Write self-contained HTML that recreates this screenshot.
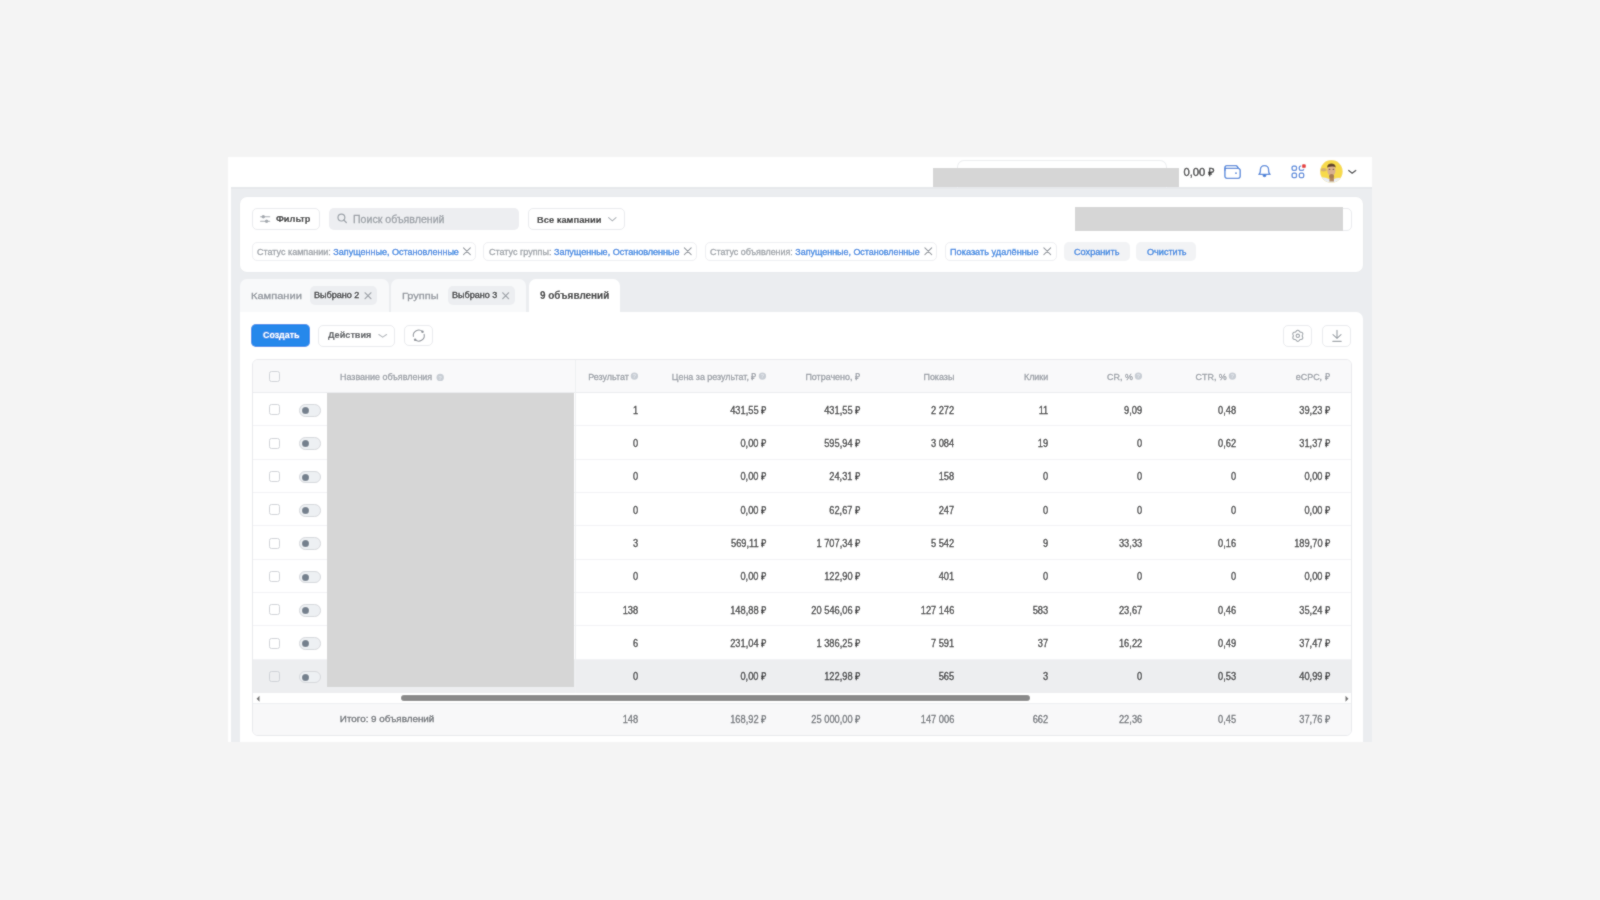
<!DOCTYPE html>
<html><head><meta charset="utf-8"><style>
*{box-sizing:border-box;margin:0;padding:0}
html,body{width:1600px;height:900px;overflow:hidden;background:#f4f4f4;font-family:"Liberation Sans",sans-serif;color:#2c2d2e}
.a{position:absolute}
.mask{position:absolute;background:#d6d6d6}
.card{position:absolute;background:#fff}
.ol{position:absolute;border:1px solid #eaebee;border-radius:5px;background:#fff}
.t{position:absolute;white-space:nowrap;line-height:1;transform-origin:0 50%;-webkit-text-stroke:0.3px currentColor}
.chip{position:absolute;top:242px;height:18.5px;border:1px solid #eeeff2;border-radius:5px;background:#fff}
.blue{color:#2d81e0;-webkit-text-stroke:0.3px #2d81e0}
.sbtn{position:absolute;top:242px;height:18.5px;border-radius:5px;background:#f2f3f5}
.tab{position:absolute;top:278.75px;height:33.5px;border-radius:7px 7px 0 0;background:#f8f9fa}
.tchip{position:absolute;top:286px;height:19px;border-radius:5px;background:#eceef1}
.ns{display:inline-block;width:3px}
.rs{display:inline-block;width:3px}
.v{position:absolute;white-space:nowrap;line-height:1;transform-origin:100% 50%;-webkit-text-stroke:0.3px currentColor}
.cb{position:absolute;width:11px;height:11px;border:1.1px solid #cfd2d7;border-radius:2.5px}
.tg{position:absolute;width:21.5px;height:12.6px;border:1.2px solid #d6d8dc;border-radius:6.3px;background:#edf0f3}
.tg:after{content:"";position:absolute;left:2px;top:2px;width:7.1px;height:7.1px;border-radius:50%;background:#75808d}
#wrap{position:absolute;left:0;top:0;width:1600px;height:900px;filter:url(#soft)}</style></head><body><svg width="0" height="0" style="position:absolute"><filter id="soft" x="0" y="0" width="100%" height="100%"><feConvolveMatrix order="3" kernelMatrix="1 2 1 2 16 2 1 2 1" edgeMode="duplicate"/></filter></svg><div id="wrap">
<div class="card" style="left:228px;top:156.5px;width:1144px;height:585.5px"></div>
<div class="a" style="left:231px;top:187.2px;width:1141px;height:554.8px;background:#ebedf0"></div>
<div class="a" style="left:231px;top:187.2px;width:1141px;height:1.4px;background:#e6e8eb"></div>
<div class="a" style="left:957px;top:160px;width:210px;height:27.5px;border:1px solid #eceef0;border-bottom:none;border-radius:7px 7px 0 0"></div>
<div class="mask" style="left:933px;top:167.5px;width:246px;height:19.7px"></div>
<div class="card" style="left:240px;top:196.8px;width:1123px;height:75.2px;border-radius:7px;box-shadow:0 0 0 0.6px #e6e8eb"></div>
<div class="ol" style="left:251.5px;top:208px;width:68px;height:22px"></div>
<div class="a" style="left:328.5px;top:208.4px;width:190.5px;height:21.5px;background:#edeef1;border-radius:5px"></div>
<div class="ol" style="left:528px;top:208px;width:97px;height:22px"></div>
<div class="ol" style="left:1075px;top:207.5px;width:276.5px;height:23px"></div>
<div class="mask" style="left:1075px;top:207px;width:268px;height:23.6px"></div>
<div class="chip" style="left:251.5px;width:224.7px"></div>
<div class="chip" style="left:483.3px;width:213.3px"></div>
<div class="chip" style="left:704.7px;width:232.8px"></div>
<div class="chip" style="left:944.9px;width:112.0px"></div>
<div class="sbtn" style="left:1064px;width:65.5px"></div>
<div class="sbtn" style="left:1135.6px;width:60.4px"></div>
<div class="tab" style="left:240.4px;width:148.6px"></div>
<div class="tchip" style="left:310.4px;width:66.6px"></div>
<div class="tab" style="left:391px;width:135px"></div>
<div class="tchip" style="left:448px;width:66.7px"></div>
<div class="tab" style="left:529px;width:91.4px;background:#fff"></div>
<div class="card" style="left:240px;top:312px;width:1123.3px;height:430px;border-radius:0 7px 0 0"></div>
<div class="a" style="left:251.25px;top:324.25px;width:58.5px;height:22.5px;background:#2688eb;border-radius:5px"></div>
<div class="ol" style="left:318px;top:325px;width:76.5px;height:21.5px"></div>
<div class="ol" style="left:403.9px;top:325px;width:29.2px;height:21.2px"></div>
<div class="ol" style="left:1282.7px;top:324.7px;width:29.3px;height:22px"></div>
<div class="ol" style="left:1322px;top:324.7px;width:29.3px;height:22px"></div>
<div class="a" style="left:252px;top:359px;width:1099.5px;height:377px;border:1px solid #e9eaed;border-radius:6px;overflow:hidden;background:#fff">
<div class="a" style="left:0;top:0;width:1100px;height:33px;background:#f9f9fa;border-bottom:1px solid #ebecef"></div>
<div class="a" style="left:0;top:65.33px;width:1100px;height:1px;background:#f2f3f5"></div>
<div class="a" style="left:0;top:98.66px;width:1100px;height:1px;background:#f2f3f5"></div>
<div class="a" style="left:0;top:131.99px;width:1100px;height:1px;background:#f2f3f5"></div>
<div class="a" style="left:0;top:165.32px;width:1100px;height:1px;background:#f2f3f5"></div>
<div class="a" style="left:0;top:198.65px;width:1100px;height:1px;background:#f2f3f5"></div>
<div class="a" style="left:0;top:231.98px;width:1100px;height:1px;background:#f2f3f5"></div>
<div class="a" style="left:0;top:265.31px;width:1100px;height:1px;background:#f2f3f5"></div>
<div class="a" style="left:0;top:298.64px;width:1100px;height:1px;background:#f2f3f5"></div>
<div class="a" style="left:0;top:299.64px;width:1100px;height:33.33px;background:#edeef0"></div>
<div class="mask" style="left:74px;top:33px;width:247px;height:293.7px"></div>
<div class="a" style="left:321.5px;top:0;width:1px;height:334px;background:#eef0f2"></div>
<div class="a" style="left:0;top:332.97px;width:1100px;height:10px;background:#fff"></div>
<div class="a" style="left:148px;top:334.97px;width:629px;height:6.2px;border-radius:3.1px;background:#8a8a8a"></div>
<div class="a" style="left:0;top:342.97px;width:1100px;height:40px;background:#f8f8f9;border-top:1px solid #eef0f2"></div>
</div>
<div class="cb" style="left:269.2px;top:404.47px"></div>
<div class="tg" style="left:299.4px;top:403.97px"></div>
<div class="cb" style="left:269.2px;top:437.80px"></div>
<div class="tg" style="left:299.4px;top:437.30px"></div>
<div class="cb" style="left:269.2px;top:471.12px"></div>
<div class="tg" style="left:299.4px;top:470.62px"></div>
<div class="cb" style="left:269.2px;top:504.46px"></div>
<div class="tg" style="left:299.4px;top:503.96px"></div>
<div class="cb" style="left:269.2px;top:537.78px"></div>
<div class="tg" style="left:299.4px;top:537.28px"></div>
<div class="cb" style="left:269.2px;top:571.12px"></div>
<div class="tg" style="left:299.4px;top:570.62px"></div>
<div class="cb" style="left:269.2px;top:604.45px"></div>
<div class="tg" style="left:299.4px;top:603.95px"></div>
<div class="cb" style="left:269.2px;top:637.77px"></div>
<div class="tg" style="left:299.4px;top:637.27px"></div>
<div class="cb" style="left:269.2px;top:671.11px"></div>
<div class="tg" style="left:299.4px;top:670.61px"></div>
<div class="cb" style="left:269.2px;top:370.8px"></div>
<div class="v" style="right:971.50px;top:372.24px;font-size:9.67px;transform:scaleX(0.9259);color:#989da4">Результат</div>
<div class="v" style="right:843.50px;top:372.24px;font-size:9.67px;transform:scaleX(0.9259);color:#989da4">Цена за результат, ₽</div>
<div class="v" style="right:739.40px;top:372.24px;font-size:9.67px;transform:scaleX(0.9259);color:#989da4">Потрачено, ₽</div>
<div class="v" style="right:645.60px;top:372.24px;font-size:9.67px;transform:scaleX(0.9259);color:#989da4">Показы</div>
<div class="v" style="right:552.00px;top:372.24px;font-size:9.67px;transform:scaleX(0.9259);color:#989da4">Клики</div>
<div class="v" style="right:467.50px;top:372.24px;font-size:9.67px;transform:scaleX(0.9259);color:#989da4">CR, %</div>
<div class="v" style="right:373.50px;top:372.24px;font-size:9.67px;transform:scaleX(0.9259);color:#989da4">CTR, %</div>
<div class="v" style="right:270.00px;top:372.24px;font-size:9.67px;transform:scaleX(0.9259);color:#989da4">eCPC, ₽</div>
<div class="v" style="right:962.00px;top:404.56px;font-size:10.88px;transform:scaleX(0.8547);color:#2c2d2e">1</div>
<div class="v" style="right:834.00px;top:404.56px;font-size:10.88px;transform:scaleX(0.8547);color:#2c2d2e">431,55<span class="rs"></span>₽</div>
<div class="v" style="right:739.40px;top:404.56px;font-size:10.88px;transform:scaleX(0.8547);color:#2c2d2e">431,55<span class="rs"></span>₽</div>
<div class="v" style="right:645.60px;top:404.56px;font-size:10.88px;transform:scaleX(0.8547);color:#2c2d2e">2<span class="ns"></span>272</div>
<div class="v" style="right:552.00px;top:404.56px;font-size:10.88px;transform:scaleX(0.8547);color:#2c2d2e">11</div>
<div class="v" style="right:458.00px;top:404.56px;font-size:10.88px;transform:scaleX(0.8547);color:#2c2d2e">9,09</div>
<div class="v" style="right:364.00px;top:404.56px;font-size:10.88px;transform:scaleX(0.8547);color:#2c2d2e">0,48</div>
<div class="v" style="right:270.00px;top:404.56px;font-size:10.88px;transform:scaleX(0.8547);color:#2c2d2e">39,23<span class="rs"></span>₽</div>
<div class="v" style="right:962.00px;top:437.89px;font-size:10.88px;transform:scaleX(0.8547);color:#2c2d2e">0</div>
<div class="v" style="right:834.00px;top:437.89px;font-size:10.88px;transform:scaleX(0.8547);color:#2c2d2e">0,00<span class="rs"></span>₽</div>
<div class="v" style="right:739.40px;top:437.89px;font-size:10.88px;transform:scaleX(0.8547);color:#2c2d2e">595,94<span class="rs"></span>₽</div>
<div class="v" style="right:645.60px;top:437.89px;font-size:10.88px;transform:scaleX(0.8547);color:#2c2d2e">3<span class="ns"></span>084</div>
<div class="v" style="right:552.00px;top:437.89px;font-size:10.88px;transform:scaleX(0.8547);color:#2c2d2e">19</div>
<div class="v" style="right:458.00px;top:437.89px;font-size:10.88px;transform:scaleX(0.8547);color:#2c2d2e">0</div>
<div class="v" style="right:364.00px;top:437.89px;font-size:10.88px;transform:scaleX(0.8547);color:#2c2d2e">0,62</div>
<div class="v" style="right:270.00px;top:437.89px;font-size:10.88px;transform:scaleX(0.8547);color:#2c2d2e">31,37<span class="rs"></span>₽</div>
<div class="v" style="right:962.00px;top:471.22px;font-size:10.88px;transform:scaleX(0.8547);color:#2c2d2e">0</div>
<div class="v" style="right:834.00px;top:471.22px;font-size:10.88px;transform:scaleX(0.8547);color:#2c2d2e">0,00<span class="rs"></span>₽</div>
<div class="v" style="right:739.40px;top:471.22px;font-size:10.88px;transform:scaleX(0.8547);color:#2c2d2e">24,31<span class="rs"></span>₽</div>
<div class="v" style="right:645.60px;top:471.22px;font-size:10.88px;transform:scaleX(0.8547);color:#2c2d2e">158</div>
<div class="v" style="right:552.00px;top:471.22px;font-size:10.88px;transform:scaleX(0.8547);color:#2c2d2e">0</div>
<div class="v" style="right:458.00px;top:471.22px;font-size:10.88px;transform:scaleX(0.8547);color:#2c2d2e">0</div>
<div class="v" style="right:364.00px;top:471.22px;font-size:10.88px;transform:scaleX(0.8547);color:#2c2d2e">0</div>
<div class="v" style="right:270.00px;top:471.22px;font-size:10.88px;transform:scaleX(0.8547);color:#2c2d2e">0,00<span class="rs"></span>₽</div>
<div class="v" style="right:962.00px;top:504.55px;font-size:10.88px;transform:scaleX(0.8547);color:#2c2d2e">0</div>
<div class="v" style="right:834.00px;top:504.55px;font-size:10.88px;transform:scaleX(0.8547);color:#2c2d2e">0,00<span class="rs"></span>₽</div>
<div class="v" style="right:739.40px;top:504.55px;font-size:10.88px;transform:scaleX(0.8547);color:#2c2d2e">62,67<span class="rs"></span>₽</div>
<div class="v" style="right:645.60px;top:504.55px;font-size:10.88px;transform:scaleX(0.8547);color:#2c2d2e">247</div>
<div class="v" style="right:552.00px;top:504.55px;font-size:10.88px;transform:scaleX(0.8547);color:#2c2d2e">0</div>
<div class="v" style="right:458.00px;top:504.55px;font-size:10.88px;transform:scaleX(0.8547);color:#2c2d2e">0</div>
<div class="v" style="right:364.00px;top:504.55px;font-size:10.88px;transform:scaleX(0.8547);color:#2c2d2e">0</div>
<div class="v" style="right:270.00px;top:504.55px;font-size:10.88px;transform:scaleX(0.8547);color:#2c2d2e">0,00<span class="rs"></span>₽</div>
<div class="v" style="right:962.00px;top:537.88px;font-size:10.88px;transform:scaleX(0.8547);color:#2c2d2e">3</div>
<div class="v" style="right:834.00px;top:537.88px;font-size:10.88px;transform:scaleX(0.8547);color:#2c2d2e">569,11<span class="rs"></span>₽</div>
<div class="v" style="right:739.40px;top:537.88px;font-size:10.88px;transform:scaleX(0.8547);color:#2c2d2e">1<span class="ns"></span>707,34<span class="rs"></span>₽</div>
<div class="v" style="right:645.60px;top:537.88px;font-size:10.88px;transform:scaleX(0.8547);color:#2c2d2e">5<span class="ns"></span>542</div>
<div class="v" style="right:552.00px;top:537.88px;font-size:10.88px;transform:scaleX(0.8547);color:#2c2d2e">9</div>
<div class="v" style="right:458.00px;top:537.88px;font-size:10.88px;transform:scaleX(0.8547);color:#2c2d2e">33,33</div>
<div class="v" style="right:364.00px;top:537.88px;font-size:10.88px;transform:scaleX(0.8547);color:#2c2d2e">0,16</div>
<div class="v" style="right:270.00px;top:537.88px;font-size:10.88px;transform:scaleX(0.8547);color:#2c2d2e">189,70<span class="rs"></span>₽</div>
<div class="v" style="right:962.00px;top:571.21px;font-size:10.88px;transform:scaleX(0.8547);color:#2c2d2e">0</div>
<div class="v" style="right:834.00px;top:571.21px;font-size:10.88px;transform:scaleX(0.8547);color:#2c2d2e">0,00<span class="rs"></span>₽</div>
<div class="v" style="right:739.40px;top:571.21px;font-size:10.88px;transform:scaleX(0.8547);color:#2c2d2e">122,90<span class="rs"></span>₽</div>
<div class="v" style="right:645.60px;top:571.21px;font-size:10.88px;transform:scaleX(0.8547);color:#2c2d2e">401</div>
<div class="v" style="right:552.00px;top:571.21px;font-size:10.88px;transform:scaleX(0.8547);color:#2c2d2e">0</div>
<div class="v" style="right:458.00px;top:571.21px;font-size:10.88px;transform:scaleX(0.8547);color:#2c2d2e">0</div>
<div class="v" style="right:364.00px;top:571.21px;font-size:10.88px;transform:scaleX(0.8547);color:#2c2d2e">0</div>
<div class="v" style="right:270.00px;top:571.21px;font-size:10.88px;transform:scaleX(0.8547);color:#2c2d2e">0,00<span class="rs"></span>₽</div>
<div class="v" style="right:962.00px;top:604.54px;font-size:10.88px;transform:scaleX(0.8547);color:#2c2d2e">138</div>
<div class="v" style="right:834.00px;top:604.54px;font-size:10.88px;transform:scaleX(0.8547);color:#2c2d2e">148,88<span class="rs"></span>₽</div>
<div class="v" style="right:739.40px;top:604.54px;font-size:10.88px;transform:scaleX(0.8547);color:#2c2d2e">20<span class="ns"></span>546,06<span class="rs"></span>₽</div>
<div class="v" style="right:645.60px;top:604.54px;font-size:10.88px;transform:scaleX(0.8547);color:#2c2d2e">127<span class="ns"></span>146</div>
<div class="v" style="right:552.00px;top:604.54px;font-size:10.88px;transform:scaleX(0.8547);color:#2c2d2e">583</div>
<div class="v" style="right:458.00px;top:604.54px;font-size:10.88px;transform:scaleX(0.8547);color:#2c2d2e">23,67</div>
<div class="v" style="right:364.00px;top:604.54px;font-size:10.88px;transform:scaleX(0.8547);color:#2c2d2e">0,46</div>
<div class="v" style="right:270.00px;top:604.54px;font-size:10.88px;transform:scaleX(0.8547);color:#2c2d2e">35,24<span class="rs"></span>₽</div>
<div class="v" style="right:962.00px;top:637.87px;font-size:10.88px;transform:scaleX(0.8547);color:#2c2d2e">6</div>
<div class="v" style="right:834.00px;top:637.87px;font-size:10.88px;transform:scaleX(0.8547);color:#2c2d2e">231,04<span class="rs"></span>₽</div>
<div class="v" style="right:739.40px;top:637.87px;font-size:10.88px;transform:scaleX(0.8547);color:#2c2d2e">1<span class="ns"></span>386,25<span class="rs"></span>₽</div>
<div class="v" style="right:645.60px;top:637.87px;font-size:10.88px;transform:scaleX(0.8547);color:#2c2d2e">7<span class="ns"></span>591</div>
<div class="v" style="right:552.00px;top:637.87px;font-size:10.88px;transform:scaleX(0.8547);color:#2c2d2e">37</div>
<div class="v" style="right:458.00px;top:637.87px;font-size:10.88px;transform:scaleX(0.8547);color:#2c2d2e">16,22</div>
<div class="v" style="right:364.00px;top:637.87px;font-size:10.88px;transform:scaleX(0.8547);color:#2c2d2e">0,49</div>
<div class="v" style="right:270.00px;top:637.87px;font-size:10.88px;transform:scaleX(0.8547);color:#2c2d2e">37,47<span class="rs"></span>₽</div>
<div class="v" style="right:962.00px;top:671.20px;font-size:10.88px;transform:scaleX(0.8547);color:#2c2d2e">0</div>
<div class="v" style="right:834.00px;top:671.20px;font-size:10.88px;transform:scaleX(0.8547);color:#2c2d2e">0,00<span class="rs"></span>₽</div>
<div class="v" style="right:739.40px;top:671.20px;font-size:10.88px;transform:scaleX(0.8547);color:#2c2d2e">122,98<span class="rs"></span>₽</div>
<div class="v" style="right:645.60px;top:671.20px;font-size:10.88px;transform:scaleX(0.8547);color:#2c2d2e">565</div>
<div class="v" style="right:552.00px;top:671.20px;font-size:10.88px;transform:scaleX(0.8547);color:#2c2d2e">3</div>
<div class="v" style="right:458.00px;top:671.20px;font-size:10.88px;transform:scaleX(0.8547);color:#2c2d2e">0</div>
<div class="v" style="right:364.00px;top:671.20px;font-size:10.88px;transform:scaleX(0.8547);color:#2c2d2e">0,53</div>
<div class="v" style="right:270.00px;top:671.20px;font-size:10.88px;transform:scaleX(0.8547);color:#2c2d2e">40,99<span class="rs"></span>₽</div>
<div class="v" style="right:962.00px;top:713.56px;font-size:10.88px;transform:scaleX(0.8547);color:#6b6f74">148</div>
<div class="v" style="right:834.00px;top:713.56px;font-size:10.88px;transform:scaleX(0.8547);color:#6b6f74">168,92<span class="rs"></span>₽</div>
<div class="v" style="right:739.40px;top:713.56px;font-size:10.88px;transform:scaleX(0.8547);color:#6b6f74">25<span class="ns"></span>000,00<span class="rs"></span>₽</div>
<div class="v" style="right:645.60px;top:713.56px;font-size:10.88px;transform:scaleX(0.8547);color:#6b6f74">147<span class="ns"></span>006</div>
<div class="v" style="right:552.00px;top:713.56px;font-size:10.88px;transform:scaleX(0.8547);color:#6b6f74">662</div>
<div class="v" style="right:458.00px;top:713.56px;font-size:10.88px;transform:scaleX(0.8547);color:#6b6f74">22,36</div>
<div class="v" style="right:364.00px;top:713.56px;font-size:10.88px;transform:scaleX(0.8547);color:#6b6f74">0,45</div>
<div class="v" style="right:270.00px;top:713.56px;font-size:10.88px;transform:scaleX(0.8547);color:#6b6f74">37,76<span class="rs"></span>₽</div>
<div class="t" style="left:1183.46px;top:166.89px;font-size:11.22px;transform:scaleX(1.0000);color:#2c2d2e">0,00 ₽</div>
<div class="t" style="left:275.97px;top:214.49px;font-size:9.77px;transform:scaleX(0.9434);font-weight:bold;-webkit-text-stroke:0.1px currentColor;">Фильтр</div>
<div class="t" style="left:352.90px;top:214.28px;font-size:10.93px;transform:scaleX(0.9709);color:#9a9fa5">Поиск объявлений</div>
<div class="t" style="left:537.04px;top:214.57px;font-size:9.82px;transform:scaleX(0.9524);font-weight:bold;-webkit-text-stroke:0.1px currentColor;">Все кампании</div>
<div class="t" style="left:257.05px;top:246.68px;font-size:9.48px;transform:scaleX(0.9524);color:#9ba0a6">Статус кампании: <span class="blue">Запущенные, Остановленные</span></div>
<div class="t" style="left:489.05px;top:246.68px;font-size:9.48px;transform:scaleX(0.9524);color:#9ba0a6">Статус группы: <span class="blue">Запущенные, Остановленные</span></div>
<div class="t" style="left:709.75px;top:246.72px;font-size:9.39px;transform:scaleX(0.9524);color:#9ba0a6">Статус объявления: <span class="blue">Запущенные, Остановленные</span></div>
<div class="t" style="left:950.27px;top:246.61px;font-size:9.63px;transform:scaleX(0.9524);color:#9ba0a6"><span class="blue">Показать удалённые</span></div>
<div class="t" style="left:1073.94px;top:246.72px;font-size:9.60px;transform:scaleX(0.9524);color:#2d81e0;-webkit-text-stroke:0.3px #2d81e0">Сохранить</div>
<div class="t" style="left:1146.64px;top:246.74px;font-size:9.56px;transform:scaleX(0.9524);color:#2d81e0;-webkit-text-stroke:0.3px #2d81e0">Очистить</div>
<div class="t" style="left:250.91px;top:291.10px;font-size:9.74px;transform:scaleX(1.1364);color:#8f949b">Кампании</div>
<div class="t" style="left:314.28px;top:291.05px;font-size:9.24px;transform:scaleX(0.9804);">Выбрано 2</div>
<div class="t" style="left:402.42px;top:290.93px;font-size:9.90px;transform:scaleX(1.1111);color:#8f949b">Группы</div>
<div class="t" style="left:451.98px;top:291.06px;font-size:9.21px;transform:scaleX(0.9804);">Выбрано 3</div>
<div class="t" style="left:540.30px;top:290.57px;font-size:10.44px;transform:scaleX(0.9524);font-weight:bold;-webkit-text-stroke:0.1px currentColor;">9 объявлений</div>
<div class="t" style="left:262.55px;top:330.95px;font-size:9.13px;transform:scaleX(0.9709);font-weight:bold;-webkit-text-stroke:0.1px currentColor;color:#fff">Создать</div>
<div class="t" style="left:328.00px;top:331.07px;font-size:8.87px;transform:scaleX(1.0309);font-weight:bold;-webkit-text-stroke:0.1px currentColor;color:#55585c">Действия</div>
<div class="t" style="left:340.28px;top:372.81px;font-size:9.31px;transform:scaleX(0.9615);color:#989da4">Название объявления</div>
<div class="t" style="left:339.81px;top:713.84px;font-size:9.87px;transform:scaleX(1.0000);color:#6b6f74">Итого: 9 объявлений</div>
<svg class="a" style="left:0;top:0" width="1600" height="900" viewBox="0 0 1600 900"><g fill="none" stroke="#4a84da" stroke-width="1.35" stroke-linejoin="round" stroke-linecap="round"><path d="M1224.9,170.5 V167.6 A2.1,2.1 0 0 1 1227,165.6 H1235.6 A2,2 0 0 1 1237.4,166.6 L1238.4,168.4"/><path d="M1224.9,168.4 H1238.1 A2.1,2.1 0 0 1 1240.2,170.5 V176.2 A2.1,2.1 0 0 1 1238.1,178.3 H1227 A2.1,2.1 0 0 1 1224.9,176.2 Z"/></g><circle cx="1236" cy="173.2" r="0.9" fill="#4a84da"/><path d="M1258.9,174.4 C1259.8,173.6 1260.4,172.6 1260.4,171 V169.7 A4.1,4.1 0 0 1 1268.6,169.7 V171 C1268.6,172.6 1269.2,173.6 1270.1,174.4 Z" fill="none" stroke="#4a84da" stroke-width="1.35" stroke-linejoin="round"/><path d="M1262.5,175.1 A2,2.2 0 0 0 1266.5,175.1 Z" fill="#4a84da"/><rect x="1292.1" y="166" width="4.4" height="4.4" rx="1.3" fill="none" stroke="#4a84da" stroke-width="1.25"/><rect x="1299.3" y="166" width="4.4" height="4.4" rx="1.3" fill="none" stroke="#4a84da" stroke-width="1.25"/><rect x="1292.1" y="173.1" width="4.4" height="4.4" rx="1.3" fill="none" stroke="#4a84da" stroke-width="1.25"/><rect x="1299.3" y="173.1" width="4.4" height="4.4" rx="1.3" fill="none" stroke="#4a84da" stroke-width="1.25"/><circle cx="1303.9" cy="166.1" r="3.1" fill="#fff"/><circle cx="1303.9" cy="166.1" r="2.2" fill="#e64646"/><defs><clipPath id="av"><circle cx="1331.4" cy="171.4" r="11.3"/></clipPath></defs><g clip-path="url(#av)"><rect x="1318" y="158" width="28" height="28" fill="#f7da4c"/><path d="M1318,177.5 Q1324,176.5 1329,179 L1334,179 Q1339,177 1346,179.5 V186 H1318Z" fill="#e9edf3"/><rect x="1329.4" y="174" width="4.6" height="7.5" fill="#b58a5e"/><ellipse cx="1331.4" cy="170.4" rx="4.1" ry="5.3" fill="#d8b08e"/><ellipse cx="1331.6" cy="176.2" rx="2.4" ry="2.2" fill="#a77d55"/><path d="M1327.1,167.4 Q1327.2,163.4 1331.4,163.4 Q1335.6,163.4 1335.7,167.4 Q1333.2,165.6 1327.1,167.4Z" fill="#5e412b"/><ellipse cx="1329.5" cy="169.3" rx="0.9" ry="0.6" fill="#6a4c3a"/><ellipse cx="1333.4" cy="169.3" rx="0.9" ry="0.6" fill="#6a4c3a"/><ellipse cx="1323.6" cy="169.8" rx="3" ry="1.7" fill="#cfa872" opacity="0.85"/></g><path d="M1348.7,170.4 L1352.2,173.2 L1355.7,170.4" fill="none" stroke="#3d3e40" stroke-width="1.3" stroke-linecap="round" stroke-linejoin="round"/><g stroke="#a3a8ae" stroke-width="1.1" stroke-linecap="round"><line x1="260.6" y1="216.8" x2="269.7" y2="216.8"/><line x1="260.6" y1="221.3" x2="269.7" y2="221.3"/></g><circle cx="263.3" cy="216.8" r="1.7" fill="#a3a8ae"/><circle cx="266.6" cy="221.3" r="1.7" fill="#a3a8ae"/><circle cx="341.4" cy="217.6" r="3.4" fill="none" stroke="#9aa0a7" stroke-width="1.2"/><line x1="343.9" y1="220.1" x2="346.3" y2="222.5" stroke="#9aa0a7" stroke-width="1.3" stroke-linecap="round"/><path d="M608.6,217.6 L612.3,220.8 L616,217.6" fill="none" stroke="#a9aeb4" stroke-width="1.1" stroke-linecap="round"/><path d="M378.8,334.5 L382.7,337.2 L386.6,334.5" fill="none" stroke="#b4b8bd" stroke-width="1.1" stroke-linecap="round"/><path d="M463.5,247.79999999999998 L470.29999999999995,254.6 M470.29999999999995,247.79999999999998 L463.5,254.6" stroke="#8f949b" stroke-width="1.1" stroke-linecap="round"/><path d="M684.35,247.79999999999998 L691.15,254.6 M691.15,247.79999999999998 L684.35,254.6" stroke="#8f949b" stroke-width="1.1" stroke-linecap="round"/><path d="M924.9,247.79999999999998 L931.6999999999999,254.6 M931.6999999999999,247.79999999999998 L924.9,254.6" stroke="#8f949b" stroke-width="1.1" stroke-linecap="round"/><path d="M1043.85,247.79999999999998 L1050.65,254.6 M1050.65,247.79999999999998 L1043.85,254.6" stroke="#8f949b" stroke-width="1.1" stroke-linecap="round"/><path d="M365.0,292.75 L371.0,298.75 M371.0,292.75 L365.0,298.75" stroke="#a0a5ab" stroke-width="1.1" stroke-linecap="round"/><path d="M502.65,292.75 L508.65,298.75 M508.65,292.75 L502.65,298.75" stroke="#a0a5ab" stroke-width="1.1" stroke-linecap="round"/><g fill="none" stroke="#8f949b" stroke-width="1.1" stroke-linecap="round"><path d="M413.37,336.46 A5.5,5.5 0 0 1 422.55,331.58"/><path d="M424.16,334.36 A5.5,5.5 0 0 1 415.12,339.69"/></g><circle cx="422.5" cy="331.7" r="1.25" fill="#8a8f96"/><circle cx="415.1" cy="339.7" r="1.25" fill="#8a8f96"/><polygon points="1297.80,330.25 1298.09,330.28 1298.37,330.38 1298.63,330.54 1298.87,330.74 1299.09,330.97 1299.29,331.21 1299.48,331.43 1299.65,331.64 1299.83,331.81 1300.02,331.95 1300.24,332.05 1300.48,332.11 1300.74,332.17 1301.03,332.21 1301.34,332.26 1301.64,332.34 1301.94,332.45 1302.21,332.60 1302.43,332.79 1302.61,333.03 1302.72,333.29 1302.77,333.59 1302.77,333.89 1302.72,334.20 1302.63,334.51 1302.52,334.80 1302.42,335.07 1302.33,335.32 1302.27,335.57 1302.25,335.80 1302.27,336.03 1302.33,336.28 1302.42,336.53 1302.52,336.80 1302.63,337.09 1302.72,337.40 1302.77,337.71 1302.77,338.01 1302.72,338.31 1302.61,338.57 1302.43,338.81 1302.21,339.00 1301.94,339.15 1301.64,339.26 1301.34,339.34 1301.03,339.39 1300.74,339.43 1300.48,339.49 1300.24,339.55 1300.02,339.65 1299.83,339.79 1299.65,339.96 1299.48,340.17 1299.29,340.39 1299.09,340.63 1298.87,340.86 1298.63,341.06 1298.37,341.22 1298.09,341.32 1297.80,341.35 1297.51,341.32 1297.23,341.22 1296.97,341.06 1296.73,340.86 1296.51,340.63 1296.31,340.39 1296.12,340.17 1295.95,339.96 1295.77,339.79 1295.58,339.65 1295.36,339.55 1295.12,339.49 1294.86,339.43 1294.57,339.39 1294.26,339.34 1293.96,339.26 1293.66,339.15 1293.39,339.00 1293.17,338.81 1292.99,338.57 1292.88,338.31 1292.83,338.01 1292.83,337.71 1292.88,337.40 1292.97,337.09 1293.08,336.80 1293.18,336.53 1293.27,336.28 1293.33,336.03 1293.35,335.80 1293.33,335.57 1293.27,335.32 1293.18,335.07 1293.08,334.80 1292.97,334.51 1292.88,334.20 1292.83,333.89 1292.83,333.59 1292.88,333.29 1292.99,333.03 1293.17,332.79 1293.39,332.60 1293.66,332.45 1293.96,332.34 1294.26,332.26 1294.57,332.21 1294.86,332.17 1295.12,332.11 1295.36,332.05 1295.58,331.95 1295.77,331.81 1295.95,331.64 1296.12,331.43 1296.31,331.21 1296.51,330.97 1296.73,330.74 1296.97,330.54 1297.23,330.38 1297.51,330.28" fill="none" stroke="#9aa0a6" stroke-width="1.1"/><circle cx="1297.8" cy="335.8" r="1.7" fill="none" stroke="#9aa0a6" stroke-width="1.1"/><g fill="none" stroke="#9aa0a6" stroke-width="1.15" stroke-linecap="round" stroke-linejoin="round"><path d="M1337,330.3 V338.2 M1333,334.6 L1337,338.4 L1341,334.6 M1332.8,341.3 H1341.2"/></g><circle cx="440.2" cy="377.4" r="3.7" fill="#c8cdd4"/><text x="440.2" y="379.59999999999997" font-size="6" font-weight="bold" text-anchor="middle" fill="#e4e7ec" font-family="Liberation Sans">?</text><circle cx="634.4" cy="376.1" r="3.7" fill="#c8cdd4"/><text x="634.4" y="378.3" font-size="6" font-weight="bold" text-anchor="middle" fill="#e4e7ec" font-family="Liberation Sans">?</text><circle cx="762.4" cy="376.1" r="3.7" fill="#c8cdd4"/><text x="762.4" y="378.3" font-size="6" font-weight="bold" text-anchor="middle" fill="#e4e7ec" font-family="Liberation Sans">?</text><circle cx="1138.4" cy="376.1" r="3.7" fill="#c8cdd4"/><text x="1138.4" y="378.3" font-size="6" font-weight="bold" text-anchor="middle" fill="#e4e7ec" font-family="Liberation Sans">?</text><circle cx="1232.4" cy="376.1" r="3.7" fill="#c8cdd4"/><text x="1232.4" y="378.3" font-size="6" font-weight="bold" text-anchor="middle" fill="#e4e7ec" font-family="Liberation Sans">?</text><path d="M259.5,695.7 L256.5,698.7 L259.5,701.7Z" fill="#6e6e6e"/><path d="M1345.5,695.7 L1348.5,698.7 L1345.5,701.7Z" fill="#6e6e6e"/></svg>
</div></body></html>
